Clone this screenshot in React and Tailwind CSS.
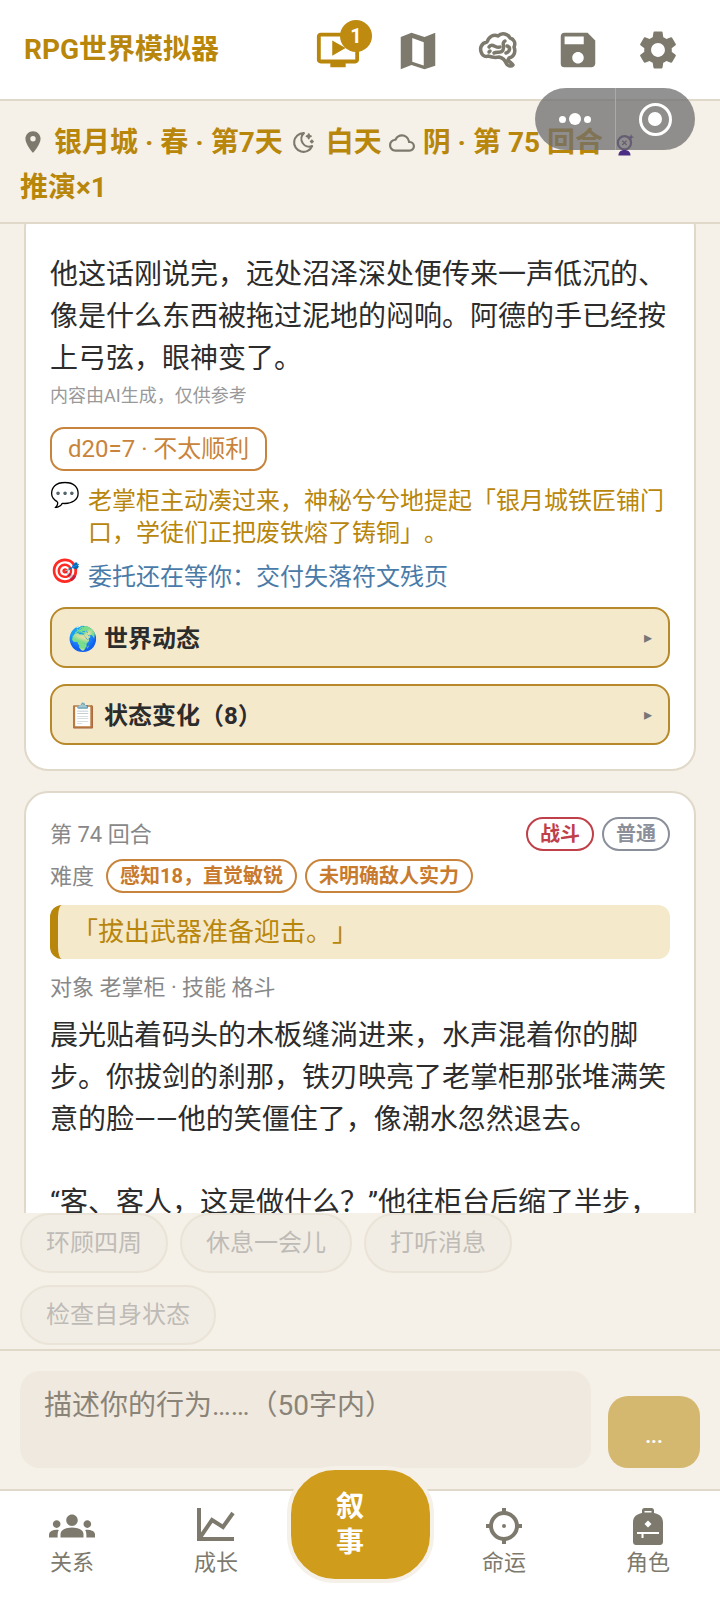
import React from 'react';
import { MdOndemandVideo, MdSave, MdSettings, MdPlace, MdGroups, MdOutlineCloud } from 'react-icons/md';
import { TbMoonStars } from 'react-icons/tb';

const font = 'font-["Roboto","Noto_Sans_CJK_SC",sans-serif]';

const MapIcon = ({ className }) => (
  <svg viewBox="0 0 24 24" className={className} fill="currentColor">
    <path d="M3 5.200 8.600 3l6.800 2.200L21 3v17.200L15.400 22l-6.800-2.200L3 22V5.200zM9 5.800v12.300l6 2V7.900L9 5.800z" fillRule="evenodd" />
  </svg>
);

const BrainIcon = ({ className }) => (
  <svg viewBox="5 5 46 46" className={className} fill="none" stroke="currentColor" strokeWidth="3.500" strokeLinecap="round" strokeLinejoin="round">
    <path d="M12 32C9 27 11 21 17 20C19 14 24 12 28 14C32 10 38 12 40 16C44 17 46 21 44 25C46 30 44 35 39 36L38 38C39 40 42 41 43 43C41 45 37 44 36 41C35 38 33 36 29 35C25 36 21 35 18 34C16 35 13 34 12 32Z" />
    <path d="M19 25C22 20 26 27 30 25" />
    <path d="M24 31C27 29 31 32 33 28C35 24 31 21 35 19" />
    <path d="M37 24C41 25 40 30 36 31" />
    <path d="M19 30L20 29" />
  </svg>
);

const BallIcon = ({ className }) => (
  <svg viewBox="0 0 20 20" className={className}>
    <circle cx="9.500" cy="8" r="6" fill="none" stroke="currentColor" strokeWidth="2" />
    <path d="m7.500 6 4 4m0-4-4 4" stroke="currentColor" strokeWidth="1.200" />
    <path d="M15.500 0l.8 2 2 .8-2 .8-.8 2-.8-2-2-.8 2-.8z" fill="currentColor" />
    <path d="M4 19.500c0-3 2-5 5.500-5s5.500 2 5.500 5z" fill="currentColor" />
  </svg>
);

const GroupsIcon = ({ className }) => <MdGroups className={`${className} p-px`} />;

const ChartIcon = ({ className }) => (
  <svg viewBox="0 0 48 48" className={className} fill="none" stroke="currentColor" strokeWidth="4">
    <path d="M7 6v31h35" />
    <path d="M7 37 20 18l11 7 10-14" />
  </svg>
);

const TargetIcon = ({ className }) => (
  <svg viewBox="0 0 48 48" className={className} fill="none" stroke="currentColor" strokeWidth="4">
    <circle cx="24" cy="24" r="13" />
    <path d="M24 6v7M24 35v7M6 24h7M35 24h7" />
    <circle cx="24" cy="24" r="2" fill="currentColor" stroke="none" />
  </svg>
);

const BackpackIcon = ({ className }) => (
  <svg viewBox="0 0 48 48" className={className}>
    <path d="M18 11V8.500C18 7 19 6 20.500 6h7C29 6 30 7 30 8.500V11c5.500 1 9 4 9 9.500V40c0 2-1.500 3-3 3H12c-1.500 0-3-1-3-3V20.500C9 15 12.500 12 18 11z" fill="currentColor" />
    <path d="M20.500 9h7v1.500h-7z" fill="#fff" />
    <path d="M24 18.500 27.500 22 24 25.500 20.500 22z" fill="#fff" />
    <path d="M13 30h22v2H19.500v4h-2v-4H13z" fill="#fff" />
  </svg>
);

const Collapse = ({ emoji, title, className }) => (
  <div className={`h-[61px] flex items-center justify-between rounded-2xl border-2 border-[#b8892b] bg-[#f5e9cc] pl-4 pr-4 ${className}`}>
    <span className="pt-[2px] text-[24px] font-bold text-[#2c2c2c]">{emoji} {title}</span>
    <span className="text-[16px] text-[#777]">▸</span>
  </div>
);

const Pill = ({ className, children }) => (
  <span className={`h-[34px] px-3 flex items-center rounded-full border-2 text-[20px] font-bold ${className}`}>{children}</span>
);

const Chip = ({ children }) => (
  <span className="h-[60px] px-6 flex items-center rounded-[30px] border-2 border-[#e0d8c8] bg-[#f0ebe1] text-[24px] text-[#888]">{children}</span>
);

const NavItem = ({ icon: Icon, label }) => (
  <div className="w-[144px] shrink-0 flex flex-col items-center pt-[11px]">
    <Icon className="w-12 h-12 text-[#7d7a6d]" />
    <span className="text-[22px] leading-[26px] text-[#7d7a6d]">{label}</span>
  </div>
);

export default function App() {
  return (
    <div className={`relative w-[720px] h-[1600px] flex flex-col overflow-hidden bg-[#f5f0e8] [text-spacing-trim:space-all] ${font}`}>
      {/* header */}
      <div className="h-[101px] shrink-0 flex items-center justify-between bg-white border-b-2 border-[#e0d8c8] pl-6 pr-[39px]">
        <span className="text-[28px] font-bold text-[#b8860b]">RPG世界模拟器</span>
        <div className="flex items-center gap-[34px]">
          <div className="relative">
            <MdOndemandVideo className="w-[46px] h-[46px] text-[#b8860b]" />
            <span className="absolute -top-[7px] -right-[11px] w-8 h-8 rounded-full bg-[#bf8a10] text-white text-[20px] font-bold flex items-center justify-center">1</span>
          </div>
          <MapIcon className="w-[46px] h-[46px] text-[#7d7a6d]" />
          <BrainIcon className="w-[46px] h-[46px] text-[#7d7a6d]" />
          <MdSave className="w-[46px] h-[46px] text-[#7d7a6d]" />
          <MdSettings className="w-[46px] h-[46px] text-[#7d7a6d]" />
        </div>
      </div>

      {/* status */}
      <div className="h-[123px] shrink-0 border-b-2 border-[#e0d8c8] px-5 pt-[19px] text-[28px] leading-[45px] font-bold text-[#b8860b]">
        <MdPlace className="inline w-[26px] h-[26px] text-[#7d7a6d] align-[-3px] mr-2" />
        银月城 · 春 · 第7天 <TbMoonStars className="inline w-[25px] h-[25px] text-[#7d7a6d] align-[-3px] ml-[1px] mr-[3px]" /> 白天 <MdOutlineCloud className="inline w-[26px] h-[26px] text-[#7d7a6d] align-[-4px] mr-[1px]" /> 阴 · 第 75 回合 <BallIcon className="inline w-[22px] h-[22px] text-[#4b2e83] align-[-4px] ml-[4px]" /> <span className="whitespace-nowrap">推演×1</span>
      </div>

      {/* scroll area */}
      <div className="h-[989px] shrink-0 overflow-hidden px-6">
        <div className="-mt-[20px] bg-white rounded-3xl border-2 border-[#e0d8c8] px-6 pt-[48px] pb-[24px] text-[#2c2c2c]">
          <p className="text-[28px] leading-[42px]">他这话刚说完，远处沼泽深处便传来一声低沉的、像是什么东西被拖过泥地的闷响。阿德的手已经按上弓弦，眼神变了。</p>
          <p className="mt-[3px] text-[18px] leading-[26px] text-[#999]">内容由AI生成，仅供参考</p>
          <div className="mt-[18px] inline-flex h-[44px] items-center px-4 rounded-[14px] border-2 border-[#c8843c] text-[24px] text-[#c8843c]">d20=7 · 不太顺利</div>
          <div className="mt-[14px] flex gap-3 text-[24px] leading-[32px] text-[#b8860b]">
            <span className="w-[26px] shrink-0 -mt-[6px]">💬</span>
            <span>老掌柜主动凑过来，神秘兮兮地提起「银月城铁匠铺门口，学徒们正把废铁熔了铸铜」。</span>
          </div>
          <div className="mt-3 flex gap-3 text-[24px] leading-[32px] text-[#4a7ba8]">
            <span className="w-[26px] shrink-0 -mt-[6px]">🎯</span>
            <span>委托还在等你：交付失落符文残页</span>
          </div>
          <Collapse emoji="🌍" title="世界动态" className="mt-[14px]" />
          <Collapse emoji="📋" title="状态变化（8）" className="mt-4" />
        </div>

        <div className="mt-[20px] bg-white rounded-3xl border-2 border-[#e0d8c8] px-6 pt-6 pb-6 text-[#2c2c2c]">
          <div className="flex items-center justify-between">
            <span className="text-[22px] text-[#888]">第 74 回合</span>
            <div className="flex gap-2">
              <Pill className="border-[#c0404a] text-[#c0404a]">战斗</Pill>
              <Pill className="border-[#8a8f9a] text-[#8a8f9a]">普通</Pill>
            </div>
          </div>
          <div className="mt-2 flex items-center gap-2">
            <span className="text-[22px] text-[#888] mr-1">难度</span>
            <Pill className="border-[#c8843c] text-[#c87a2e]">感知18，直觉敏锐</Pill>
            <Pill className="border-[#c8843c] text-[#c87a2e]">未明确敌人实力</Pill>
          </div>
          <div className="mt-3 h-[54px] flex items-center rounded-xl border-l-[8px] border-[#b8860b] bg-[#f5e9cc] pl-[14px] text-[26px] text-[#b8860b]">「拔出武器准备迎击。」</div>
          <p className="mt-3 text-[22px] text-[#888]">对象 老掌柜 · 技能 格斗</p>
          <p className="mt-[11px] text-[28px] leading-[42px]">晨光贴着码头的木板缝淌进来，水声混着你的脚步。你拔剑的刹那，铁刃映亮了老掌柜那张堆满笑意的脸——他的笑僵住了，像潮水忽然退去。</p>
          <p className="mt-[41px] text-[28px] leading-[42px]">“客、客人，这是做什么？”他往柜台后缩了半步，</p>
        </div>
      </div>

      {/* suggested actions */}
      <div className="h-[136px] shrink-0 flex flex-wrap content-start gap-x-3 gap-y-3 px-5 opacity-50">
        <Chip>环顾四周</Chip>
        <Chip>休息一会儿</Chip>
        <Chip>打听消息</Chip>
        <Chip>检查自身状态</Chip>
      </div>

      {/* input */}
      <div className="h-[140px] shrink-0 border-t-2 border-[#e0d8c8] flex items-end gap-[17px] pl-5 pr-5 pb-[21px]">
        <div className="w-[571px] h-[97px] rounded-[20px] bg-[#f0e9df] pl-6 pt-[14px] text-[28px] text-[#8a8478]">描述你的行为……（50字内）</div>
        <div className="w-[92px] h-[72px] rounded-[20px] bg-[#d4b870] text-white text-[20px] font-bold flex items-center justify-center pt-2">...</div>
      </div>

      {/* bottom nav */}
      <div className="flex-1 flex bg-white border-t-2 border-[#e0d8c8]">
        <NavItem icon={GroupsIcon} label="关系" />
        <NavItem icon={ChartIcon} label="成长" />
        <div className="w-[144px] shrink-0 flex justify-center">
          <div className="-mt-[25px] w-[147px] h-[117px] shrink-0 rounded-[48px] border-[4px] border-[#f5f0e8] bg-[#d09c1c] text-white text-[28px] leading-[36px] font-bold flex items-center justify-center text-center pr-5">叙<br />事</div>
        </div>
        <NavItem icon={TargetIcon} label="命运" />
        <NavItem icon={BackpackIcon} label="角色" />
      </div>

      {/* wechat capsule */}
      <div className="absolute left-[535px] top-[88px] w-[160px] h-[62px] rounded-full bg-[#6e6e6e]/75 flex items-center">
        <div className="flex-1 flex items-center justify-center gap-[3px]">
          <span className="w-[7px] h-[7px] rounded-full bg-white" />
          <span className="w-3 h-3 rounded-full bg-white" />
          <span className="w-[7px] h-[7px] rounded-full bg-white" />
        </div>
        <div className="w-px h-[62px] bg-[#aaa]" />
        <div className="flex-1 flex items-center justify-center">
          <div className="w-[33px] h-[33px] rounded-full border-[3px] border-white flex items-center justify-center">
            <span className="w-[14px] h-[14px] rounded-full bg-white" />
          </div>
        </div>
      </div>
    </div>
  );
}
